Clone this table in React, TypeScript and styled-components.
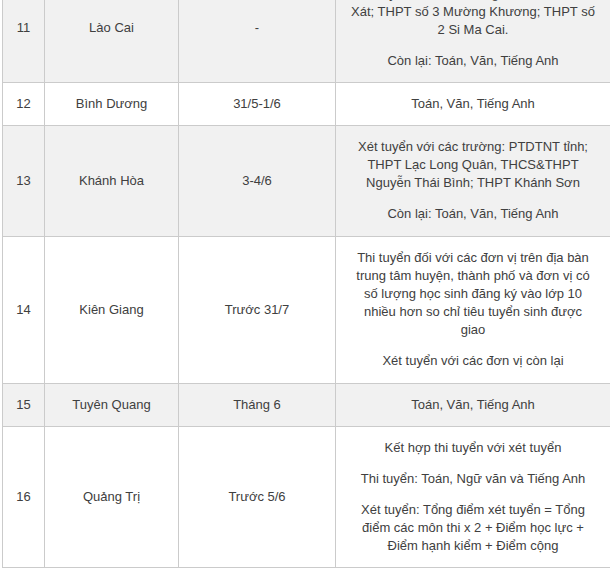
import React from "react";
import styled, { createGlobalStyle } from "styled-components";

const GlobalStyle = createGlobalStyle`
  html, body {
    margin: 0;
    padding: 0;
    background: #ffffff;
    overflow: hidden;
  }
  body {
    font-family: "Liberation Sans", Arial, sans-serif;
  }
`;

const Page = styled.div`
  margin-top: -28px;
  padding-left: 2px;
`;

const Table = styled.table`
  border-collapse: collapse;
  table-layout: fixed;
  width: 608px;
  font-family: "Liberation Sans", Arial, sans-serif;
  font-size: 13px;
  line-height: 18px;
  color: #404040;
`;

const Row = styled.tr<{ $shaded: boolean }>`
  background: ${(p) => (p.$shaded ? "#f1f1f1" : "#ffffff")};
`;

const Cell = styled.td<{ $extra?: number }>`
  border: 1px solid #cbcbcb;
  padding: 12px 6px ${(p) => 12 + (p.$extra ?? 0)}px;
  text-align: center;
  vertical-align: middle;
`;

const Notes = styled.div`
  display: flex;
  flex-direction: column;
  gap: 13px;
`;

const Para = styled.p`
  margin: 0;
`;

type RowData = {
  no: string;
  province: string;
  date: string;
  extra?: number;
  paras: React.ReactNode[];
};

const rows: RowData[] = [
  {
    no: "11",
    province: "Lào Cai",
    date: "-",
    paras: [
      <>
        Xét tuyển với các trường: THPT số 2 Bát
        <br />
        Xát; THPT số 3 Mường Khương; THPT số
        <br />2 Si Ma Cai.
      </>,
      "Còn lại: Toán, Văn, Tiếng Anh",
    ],
  },
  {
    no: "12",
    province: "Bình Dương",
    date: "31/5-1/6",
    paras: ["Toán, Văn, Tiếng Anh"],
  },
  {
    no: "13",
    province: "Khánh Hòa",
    date: "3-4/6",
    extra: 1,
    paras: [
      <>
        Xét tuyển với các trường: PTDTNT tỉnh;
        <br />
        THPT Lạc Long Quân, THCS&amp;THPT
        <br />
        Nguyễn Thái Bình; THPT Khánh Sơn
      </>,
      "Còn lại: Toán, Văn, Tiếng Anh",
    ],
  },
  {
    no: "14",
    province: "Kiên Giang",
    date: "Trước 31/7",
    extra: 1,
    paras: [
      <>
        Thi tuyển đối với các đơn vị trên địa bàn
        <br />
        trung tâm huyện, thành phố và đơn vị có
        <br />
        số lượng học sinh đăng ký vào lớp 10
        <br />
        nhiều hơn so chỉ tiêu tuyển sinh được
        <br />
        giao
      </>,
      "Xét tuyển với các đơn vị còn lại",
    ],
  },
  {
    no: "15",
    province: "Tuyên Quang",
    date: "Tháng 6",
    paras: ["Toán, Văn, Tiếng Anh"],
  },
  {
    no: "16",
    province: "Quảng Trị",
    date: "Trước 5/6",
    paras: [
      "Kết hợp thi tuyển với xét tuyển",
      "Thi tuyển: Toán, Ngữ văn và Tiếng Anh",
      <>
        Xét tuyển: Tổng điểm xét tuyển = Tổng
        <br />
        điểm các môn thi x 2 + Điểm học lực +
        <br />
        Điểm hạnh kiểm + Điểm cộng
      </>,
    ],
  },
];

export default function App() {
  return (
    <>
      <GlobalStyle />
      <Page>
        <Table>
          <colgroup>
            <col style={{ width: 42 }} />
            <col style={{ width: 134 }} />
            <col style={{ width: 157 }} />
            <col style={{ width: 275 }} />
          </colgroup>
          <tbody>
            {rows.map((r, i) => (
              <Row key={r.no} $shaded={i % 2 === 0}>
                <Cell $extra={r.extra}>{r.no}</Cell>
                <Cell $extra={r.extra}>{r.province}</Cell>
                <Cell $extra={r.extra}>{r.date}</Cell>
                <Cell $extra={r.extra}>
                  {r.paras.length > 1 ? (
                    <Notes>
                      {r.paras.map((p, j) => (
                        <Para key={j}>{p}</Para>
                      ))}
                    </Notes>
                  ) : (
                    r.paras[0]
                  )}
                </Cell>
              </Row>
            ))}
          </tbody>
        </Table>
      </Page>
    </>
  );
}
